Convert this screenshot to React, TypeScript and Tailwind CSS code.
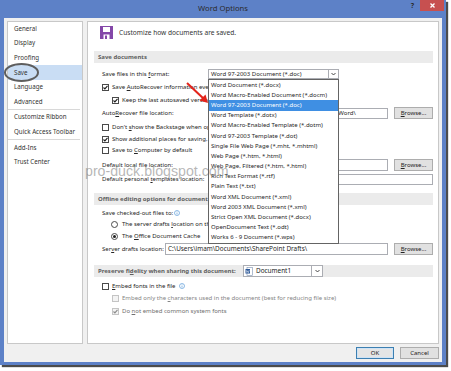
import React from "react";

const Check = ({ checked = false, disabled = false }: { checked?: boolean; disabled?: boolean }) => (
  <span
    className={
      disabled
        ? "w-[7px] h-[7px] shrink-0 border border-[#C4C4C4] bg-[#F3F3F3] flex items-center justify-center"
        : "w-[7px] h-[7px] shrink-0 border border-[#4A4A4A] bg-white flex items-center justify-center"
    }
  >
    {checked && (
      <svg width="5" height="5" viewBox="0 0 5 5">
        <path d="M0.5 2.5 L1.9 3.9 L4.5 0.8" fill="none" stroke={disabled ? "#8A8A8A" : "#1E1E1E"} strokeWidth="1.1" />
      </svg>
    )}
  </span>
);

const Radio = ({ checked = false }: { checked?: boolean }) => (
  <span className="w-[7px] h-[7px] shrink-0 rounded-full border border-[#4A4A4A] bg-white flex items-center justify-center">
    {checked && <span className="w-[3px] h-[3px] rounded-full bg-[#1E1E1E]" />}
  </span>
);

const Info = () => (
  <svg width="6" height="6" viewBox="0 0 6 6" className="ml-[1px] shrink-0">
    <circle cx="3" cy="3" r="2.5" fill="white" stroke="#5B9BD9" strokeWidth="0.7" />
    <line x1="3" y1="2.5" x2="3" y2="4.5" stroke="#5B9BD9" strokeWidth="0.7" />
    <circle cx="3" cy="1.6" r="0.4" fill="#5B9BD9" />
  </svg>
);

const Browse = () => (
  <div className="w-[39px] h-[12px] shrink-0 border border-[#ADADAD] bg-[#E1E1E1] flex items-center justify-center text-[6px] text-[#222]">
    <span>
      <span className="underline">B</span>rowse...
    </span>
  </div>
);

const Bar = ({ children }: { children: React.ReactNode }) => (
  <div className="h-[12px] shrink-0 bg-[#EBEBEB] flex items-center pl-[4px] font-bold text-[#5E5E5E] whitespace-nowrap">
    {children}
  </div>
);

const Chevron = () => (
  <svg width="5" height="4" viewBox="0 0 5 4">
    <path d="M0.5 1 L2.5 3 L4.5 1" fill="none" stroke="#333" strokeWidth="0.9" />
  </svg>
);

const formats = [
  "Word Document (*.docx)",
  "Word Macro-Enabled Document (*.docm)",
  "Word 97-2003 Document (*.doc)",
  "Word Template (*.dotx)",
  "Word Macro-Enabled Template (*.dotm)",
  "Word 97-2003 Template (*.dot)",
  "Single File Web Page (*.mht, *.mhtml)",
  "Web Page (*.htm, *.html)",
  "Web Page, Filtered (*.htm, *.html)",
  "Rich Text Format (*.rtf)",
  "Plain Text (*.txt)",
  "Word XML Document (*.xml)",
  "Word 2003 XML Document (*.xml)",
  "Strict Open XML Document (*.docx)",
  "OpenDocument Text (*.odt)",
  "Works 6 - 9 Document (*.wps)",
];

const navTop = [
  { t: "General", h: "h-[14px]" },
  { t: "Display", h: "h-[14px]" },
  { t: "Proofing", h: "h-[15px]" },
  { t: "Save", h: "h-[15px]", active: true },
  { t: "Language", h: "h-[14px]" },
  { t: "Advanced", h: "h-[15px]" },
];

export default function App() {
  return (
    <div className="w-[451px] h-[371px] bg-white relative overflow-hidden font-['Noto_Sans',sans-serif] text-[6px] text-[#262626]">
      {/* window */}
      <div className="w-[446px] h-[365px] bg-[#5D81C7] flex flex-col px-[4px] pb-[3px] shadow-[2px_2px_1px_rgba(0,0,0,0.7)]">
        {/* title bar */}
        <div className="h-[18px] shrink-0 grid grid-cols-[1fr_auto_1fr]">
          <div />
          <div className="text-[7.7px] leading-[16px] text-[#2B2B2B] font-['Noto_Sans',sans-serif]">Word Options</div>
          <div className="flex justify-end items-start mr-[-2px]">
            <span className="text-[7px] leading-[12px] font-bold text-[#2B2B2B] mr-[6px]">?</span>
            <div className="w-[24px] h-[11px] bg-[#C75050] flex items-center justify-center">
              <svg width="5" height="5" viewBox="0 0 5 5">
                <path d="M0.5 0.5 L4.5 4.5 M4.5 0.5 L0.5 4.5" stroke="white" strokeWidth="1.3" />
              </svg>
            </div>
          </div>
        </div>

        {/* body */}
        <div className="flex-1 bg-[#F0F0F0] flex flex-col px-[3px] pt-[3px]">
          <div className="h-[323px] shrink-0 flex gap-[4px]">
            {/* nav */}
            <div className="w-[76px] h-full bg-white border border-[#C8C8C8] flex flex-col text-[6.2px] text-[#333]">
              {navTop.map((n) => (
                <div
                  key={n.t}
                  className={`${n.h} flex items-center pl-[6px] ${n.active ? "bg-[#C9DDF4]" : ""}`}
                >
                  {n.t}
                </div>
              ))}
              <div className="h-px bg-[#D8D8D8] mr-[2px]" />
              <div className="h-[14px] flex items-center pl-[6px]">Customize Ribbon</div>
              <div className="h-[15px] flex items-center pl-[6px]">Quick Access Toolbar</div>
              <div className="h-px bg-[#D8D8D8] mr-[2px]" />
              <div className="h-[15px] flex items-center pl-[6px]">Add-Ins</div>
              <div className="h-[14px] flex items-center pl-[6px]">Trust Center</div>
            </div>

            {/* main */}
            <div className="w-[352px] h-full bg-white border border-[#C8C8C8] overflow-hidden">
              <div className="pl-[6px] pr-[5px] flex flex-col whitespace-nowrap">
                {/* header */}
                <div className="h-[13px] mt-[4px] flex items-center pl-[6px] gap-[6px]">
                  <svg width="13" height="13" viewBox="0 0 13 13" className="shrink-0">
                    <rect x="0" y="0" width="13" height="13" fill="#8447A8" />
                    <rect x="3" y="1" width="7" height="5" fill="white" />
                    <rect x="3.5" y="8.5" width="6" height="4.5" fill="white" />
                    <rect x="5" y="9.5" width="2" height="3.5" fill="#8447A8" />
                  </svg>
                  <span className="text-[6.6px] text-[#333]">Customize how documents are saved.</span>
                </div>

                <div className="mt-[12px]">
                  <Bar>Save documents</Bar>
                </div>

                {/* format row */}
                <div className="h-[12px] mt-[5px] flex items-center pl-[8px]">
                  <span className="w-[106px] shrink-0">
                    Save files in this <span className="underline">f</span>ormat:
                  </span>
                  <div className="relative w-[131px] h-[10px] shrink-0 border border-[#ABADB3] bg-white flex items-center">
                    <span className="flex-1 pl-[2px] text-[6px]">Word 97-2003 Document (*.doc)</span>
                    <span className="w-[10px] h-full border-l border-[#ABADB3] flex items-center justify-center">
                      <Chevron />
                    </span>
                    {/* open list */}
                    <div className="absolute z-10 left-[-1px] top-[9px] w-[131px] border border-[#646464] bg-white flex flex-col">
                      {formats.map((f, i) => (
                        <div
                          key={f}
                          className={
                            i === 2
                              ? "h-[10.2px] flex items-center pl-[2px] bg-[#3F8FE3] text-white"
                              : "h-[10.2px] flex items-center pl-[2px] text-[#262626]"
                          }
                        >
                          {f}
                        </div>
                      ))}
                    </div>
                  </div>
                </div>

                <div className="h-[14px] flex items-center pl-[8px] gap-[3px]">
                  <Check checked />
                  <span>
                    Save <span className="underline">A</span>utoRecover information every
                  </span>
                </div>
                <div className="h-[12px] flex items-center pl-[18px] gap-[3px]">
                  <Check checked />
                  <span>Keep the last autosaved version if I close without saving</span>
                </div>
                <div className="h-[12px] mt-[1px] flex items-center pl-[8px]">
                  <span className="w-[106px] shrink-0">
                    Auto<span className="underline">R</span>ecover file location:
                  </span>
                  <div className="w-[180px] h-[11px] shrink-0 border border-[#ABADB3] bg-white flex items-center pl-[2px] overflow-hidden text-[6px]">
                    C:\Users\imam\AppData\Roaming\Microsoft\Word\
                  </div>
                  <div className="ml-[6px]">
                    <Browse />
                  </div>
                </div>
                <div className="h-[12px] mt-[2px] flex items-center pl-[8px] gap-[3px]">
                  <Check />
                  <span>
                    Don't <span className="underline">s</span>how the Backstage when opening or saving files
                  </span>
                </div>
                <div className="h-[12px] flex items-center pl-[8px] gap-[3px]">
                  <Check checked />
                  <span>Show additional places for saving, even if sign-in may be required.</span>
                </div>
                <div className="h-[10px] flex items-center pl-[8px] gap-[3px]">
                  <Check />
                  <span>
                    Save to <span className="underline">C</span>omputer by default
                  </span>
                </div>
                <div className="h-[12px] mt-[4px] flex items-center pl-[8px]">
                  <span className="w-[106px] shrink-0">
                    Default local f<span className="underline">i</span>le location:
                  </span>
                  <div className="w-[180px] h-[12px] shrink-0 border border-[#ABADB3] bg-white" />
                  <div className="ml-[6px]">
                    <Browse />
                  </div>
                </div>
                <div className="h-[12px] mt-[2px] flex items-center pl-[8px]">
                  <span className="w-[106px] shrink-0">
                    Default personal <span className="underline">t</span>emplates location:
                  </span>
                  <div className="w-[225px] h-[11px] shrink-0 border border-[#ABADB3] bg-white" />
                </div>

                <div className="mt-[8px]">
                  <Bar>Offline editing options for document management server files</Bar>
                </div>

                <div className="h-[12px] mt-[2px] flex items-center pl-[8px]">
                  <span>Save checked-out files to:</span>
                  <Info />
                </div>
                <div className="h-[10px] flex items-center pl-[17px] gap-[4px]">
                  <Radio />
                  <span>
                    The server drafts <span className="underline">l</span>ocation on this computer
                  </span>
                </div>
                <div className="h-[12px] mt-[1px] flex items-center pl-[17px] gap-[4px]">
                  <Radio checked />
                  <span>
                    The <span className="underline">O</span>ffice Document Cache
                  </span>
                </div>
                <div className="h-[12px] mt-[1px] flex items-center pl-[8px]">
                  <span className="w-[63px] shrink-0">
                    Ser<span className="underline">v</span>er drafts location:
                  </span>
                  <div className="w-[223px] h-[12px] shrink-0 border border-[#ABADB3] bg-white flex items-center pl-[2px] overflow-hidden text-[6.4px]">
                    C:\Users\imam\Documents\SharePoint Drafts\
                  </div>
                  <div className="ml-[6px]">
                    <Browse />
                  </div>
                </div>

                <div className="mt-[10px] h-[12px] bg-[#EBEBEB] flex items-center pl-[4px] font-bold text-[#5E5E5E]">
                  <span className="w-[145px] shrink-0">
                    Preserve fi<span className="underline">d</span>elity when sharing this document:
                  </span>
                  <div className="w-[80px] h-[12px] border border-[#ABADB3] bg-white flex items-center font-normal text-[#222]">
                    <svg width="8" height="9" viewBox="0 0 8 9" className="ml-[1px] shrink-0">
                      <rect x="2" y="0.5" width="5.5" height="8" fill="white" stroke="#7A8FB0" strokeWidth="0.6" />
                      <rect x="0.5" y="2" width="4.5" height="4.5" fill="#2B5797" />
                      <path d="M1.2 3 L1.9 5.6 L2.7 3.8 L3.5 5.6 L4.3 3" fill="none" stroke="white" strokeWidth="0.5" />
                    </svg>
                    <span className="flex-1 pl-[3px] text-[6.4px]">Document1</span>
                    <span className="w-[11px] h-full border-l border-[#ABADB3] flex items-center justify-center">
                      <Chevron />
                    </span>
                  </div>
                </div>

                <div className="h-[12px] mt-[3px] flex items-center pl-[8px] gap-[3px]">
                  <Check />
                  <span>
                    <span className="underline">E</span>mbed fonts in the file
                  </span>
                  <Info />
                </div>
                <div className="h-[12px] flex items-center pl-[18px] gap-[3px] text-[#858585]">
                  <Check disabled />
                  <span>
                    Embed only the <span className="underline">c</span>haracters used in the document (best for reducing file size)
                  </span>
                </div>
                <div className="h-[12px] mt-[1px] flex items-center pl-[18px] gap-[3px] text-[#6E6E6E]">
                  <Check checked disabled />
                  <span>
                    Do <span className="underline">n</span>ot embed common system fonts
                  </span>
                </div>
              </div>
            </div>
          </div>

          {/* footer */}
          <div className="flex-1 flex justify-end items-center gap-[6px]">
            <div className="w-[38px] h-[12px] border border-[#3C7FB1] bg-[#E5E5E5] flex items-center justify-center text-[6px] text-[#222] shadow-[inset_0_0_0_1px_#CFE3F5]">
              OK
            </div>
            <div className="w-[39px] h-[12px] border border-[#ADADAD] bg-[#E1E1E1] flex items-center justify-center text-[6px] text-[#222]">
              Cancel
            </div>
          </div>
        </div>
      </div>

      {/* annotation: ellipse around Save */}
      <div className="absolute left-[4px] top-[63px] w-[35px] h-[19px] rounded-[50%] border-2 border-[#5E5E5E]" />

      {/* annotation: red arrow */}
      <svg className="absolute left-[184px] top-[80px] z-20" width="28" height="28" viewBox="0 0 28 28">
        <line x1="3" y1="3" x2="20" y2="19" stroke="#E3241B" strokeWidth="2" />
        <path d="M24 23 L15.5 20.5 L21.5 14.5 Z" fill="#E3241B" />
      </svg>

      {/* watermark */}
      <div className="absolute left-[85px] top-[162px] z-30 text-[14.2px] leading-[18px] font-['Liberation_Sans',sans-serif] text-[rgba(110,110,110,0.5)] whitespace-nowrap">
        pro-duck.blogspot.com
      </div>
    </div>
  );
}
